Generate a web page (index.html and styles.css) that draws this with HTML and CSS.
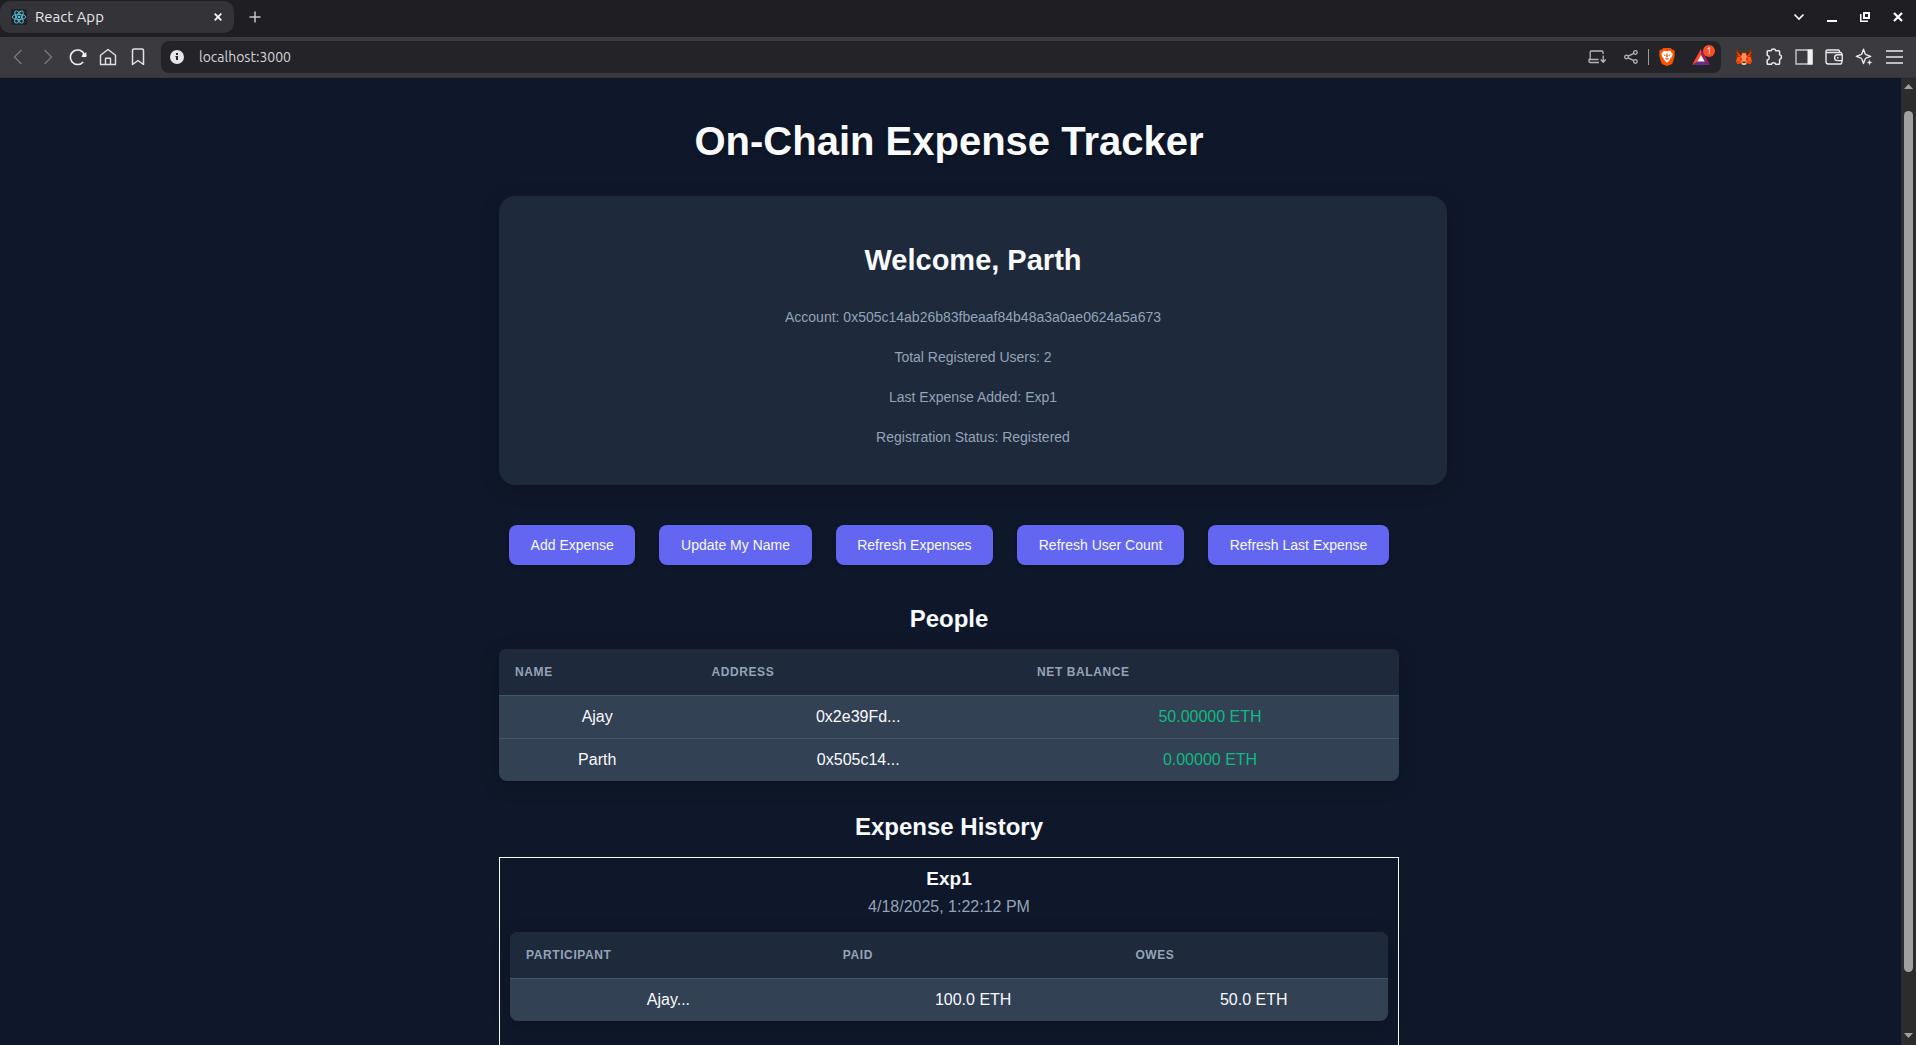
FILE: index.html
```
<!DOCTYPE html>
<html lang="en">
<head>
<meta charset="utf-8">
<title>React App</title>
<link rel="stylesheet" href="styles.css">
</head>
<body>
<header class="chrome">
  <div class="tabstrip">
    <div class="tab">
      <svg class="favicon" width="16" height="16" viewBox="0 0 16 16" fill="none" stroke="#58c4dc" stroke-width=".9">
        <rect width="16" height="16" rx="1.5" fill="#20232a" stroke="none"/>
        <ellipse cx="8" cy="8" rx="6.8" ry="2.6"/>
        <ellipse cx="8" cy="8" rx="6.8" ry="2.6" transform="rotate(60 8 8)"/>
        <ellipse cx="8" cy="8" rx="6.8" ry="2.6" transform="rotate(120 8 8)"/>
        <circle cx="8" cy="8" r="1.3" fill="#58c4dc" stroke="none"/>
      </svg>
      <span class="tab-title">React App</span>
      <button class="icon-btn tab-close" aria-label="Close tab"><svg width="8" height="8" viewBox="0 0 8 8" stroke="#fff" stroke-width="1.7"><path d="M.7.7l6.6 6.6M7.3.7L.7 7.3"/></svg></button>
    </div>
    <button class="icon-btn new-tab" aria-label="New tab"><svg width="12" height="12" viewBox="0 0 12 12" stroke="#c8c8cc" stroke-width="1.5"><path d="M6 .5v11M.5 6h11"/></svg></button>
    <div class="window-controls">
      <button class="icon-btn" aria-label="Search tabs"><svg width="12" height="8" viewBox="0 0 12 8" fill="none" stroke="#fff" stroke-width="1.6"><path d="M1.500 1.500L6 6l4.500-4.500"/></svg></button>
      <button class="icon-btn" aria-label="Minimize"><svg width="10" height="12" viewBox="0 0 10 12"><path fill="#fff" d="M0 9h10v2H0z"/></svg></button>
      <button class="icon-btn" aria-label="Restore"><svg width="10" height="10" viewBox="0 0 10 10" fill="none" stroke="#fff"><path stroke-width="2" d="M4 1h5v5H4z"/><path stroke-width="1.500" d="M.75 2v7.250H8"/></svg></button>
      <button class="icon-btn" aria-label="Close window"><svg width="10" height="10" viewBox="0 0 10 10" stroke="#fff" stroke-width="2.200"><path d="M1 1l8 8M9 1L1 9"/></svg></button>
    </div>
  </div>
  <div class="toolbar">
    <button class="icon-btn" aria-label="Back"><svg width="10" height="16" viewBox="0 0 10 16" fill="none" stroke="#77777c" stroke-width="1.4"><path d="M8.500 1L1.500 8l7 7"/></svg></button>
    <button class="icon-btn" aria-label="Forward"><svg width="10" height="16" viewBox="0 0 10 16" fill="none" stroke="#77777c" stroke-width="1.4"><path d="M1.500 1l7 7-7 7"/></svg></button>
    <button class="icon-btn" aria-label="Reload"><svg width="18" height="18" viewBox="0 0 18 18" fill="none" stroke="#f0f0f3" stroke-width="1.600"><path d="M14.200 14a7.300 7.300 0 1 1 1.200-7.500"/><circle cx="15.300" cy="7.200" r="2" fill="#f0f0f3" stroke="none"/><path d="M17.300 4v5h-5z" fill="#f0f0f3" stroke="none"/></svg></button>
    <button class="icon-btn" aria-label="Home"><svg width="18" height="18" viewBox="0 0 18 18" fill="none" stroke="#e2e2e6" stroke-width="1.400" stroke-linejoin="round"><path d="M1.500 7.300L9 1.500l7.500 5.800v9.200h-15z"/><path d="M6.500 16.500v-6.200h5v6.200"/></svg></button>
    <button class="icon-btn" aria-label="Bookmark"><svg width="14" height="18" viewBox="0 0 14 18" fill="none" stroke="#e2e2e6" stroke-width="1.500" stroke-linejoin="round"><path d="M1.500 2.500q0-1.500 1.500-1.500h8q1.500 0 1.500 1.500v14L7 12.500l-5.500 4z"/></svg></button>
    <div class="address-bar">
      <svg class="info" width="14" height="14" viewBox="0 0 14 14"><circle cx="7" cy="7" r="7" fill="#e6e6ea"/><path d="M6 3h2v2H6zM5.500 6H8v4H6V7.300h-.5z" fill="#26262b"/></svg>
      <input class="url" type="text" value="localhost:3000" aria-label="Address">
      <button class="icon-btn" aria-label="Install page"><svg width="18" height="14" viewBox="0 0 18 14" fill="none" stroke="#b4b4b9" stroke-width="1.300"><path d="M15 4V2.200Q15 1 14 1H3.200Q2.200 1 2.200 2.200V9.500h8.300M11 12.500H2Q1 12.500 1 11.500V9.500h2M15.200 5.500v6.500M12.700 9.500l2.500 2.700 2.500-2.700"/></svg></button>
      <button class="icon-btn" aria-label="Share"><svg width="14" height="14" viewBox="0 0 14 14" fill="none" stroke="#b4b4b9" stroke-width="1.300"><circle cx="2.500" cy="7" r="1.800"/><circle cx="11.400" cy="2.500" r="1.800"/><circle cx="11.400" cy="11.500" r="1.800"/><path d="M4.200 6.200l5.600-2.900M4.200 7.800l5.600 2.900"/></svg></button>
      <span class="divider"></span>
      <button class="icon-btn" aria-label="Brave Shields"><svg width="16" height="18" viewBox="0 0 16 18"><path fill="#ff5000" d="M4.300 0h7.400l1.600 1.700 1.600.1 1.100 2.400-.6 1.400.4 1.600-2 7.300q-.3 1-1.300 1.700L8 18l-4.500-1.800q-1-.7-1.300-1.700L.2 7.200l.4-1.600L0 4.200l1.100-2.400 1.600-.1z"/><path fill="#fff" d="M4.800 2.800l3.200.5 3.200-.5 2.500 3-.7 2.600-1.900 2.300v1.100L8 14.700l-3.100-2.900v-1.100L3 8.400l-.7-2.600z"/><path fill="#ff5000" d="M4.100 6.600l2.700.3-.8 1.300zM11.900 6.600l-2.700.3.8 1.300zM7.600 5.300h.8l.5 3.700h-1.800zM5.800 10.600L8 9.700l2.200.9L8 12.200z"/><path fill="#fff" d="M6.900 10.500h2.200L8 11.400z"/></svg></button>
      <button class="icon-btn rewards" aria-label="Brave Rewards"><svg width="18" height="16" viewBox="0 0 18 16"><path fill="#ff4724" d="M9 0L0 16l5.700-3.200L9 6.500z"/><path fill="#9e1f63" d="M9 0l9 16-5.700-3.200L9 6.500z"/><path fill="#662d91" d="M0 16h18l-5.700-3.500H5.700z"/><path fill="#fff" d="M9 6l3.700 6.500H5.300z"/></svg><span class="badge">1</span></button>
    </div>
    <button class="icon-btn" aria-label="MetaMask"><svg width="16" height="15" viewBox="0 0 16 15"><path fill="#ff5c16" d="M.8 0L6 3h4l5.200-3L16 4.500l-1 3.300.8 3-1 3.200-3.300-.8L9.500 15h-3l-2-1.800L1.200 14l-1-3.200.8-3L0 4.500z"/><path fill="#661800" d="M.8 0L6.300 3.300 5.500 6 1 7.300 0 4.500zM15.200 0L9.700 3.300l.8 2.700L15 7.300l1-2.800z"/><path fill="#e34807" d="M1 .7L5.300 6l-3.800.8zM15 .7L10.700 6l3.800.8zM.2 10.800h4.300v2.400L1.200 14zM15.800 10.800h-4.300v2.400l3.300.8z"/><path fill="#ff8d5d" d="M6 3.300h4l.8 3.500-1 4.700H6.200l-1-4.700z"/><path fill="#2b1a12" d="M4.200 8.200l2 .9-1.600.7zM11.800 8.200l-2 .9 1.600.7z"/><path fill="#c0c4cd" d="M5.800 12h4.400l-.5 3H6.300z"/><path fill="#3a3330" d="M6.600 11.700h2.800l.2 1.300H6.400z"/></svg></button>
    <button class="icon-btn" aria-label="Extensions"><svg width="18" height="18" viewBox="0 0 18 18" fill="none" stroke="#eaeaee" stroke-width="1.500" stroke-linejoin="round"><path d="M2.200 3.500q0-.8.800-.8h3.200a2.300 2.300 0 0 1 4.500 0h3.100q.8 0 .8.800v3.200a2.400 2.400 0 0 1 0 4.700v4q0 .9-.9.900h-2.900a2.300 2.300 0 0 0-4.400 0H3q-.8 0-.8-.8v-3.400a2.500 2.500 0 0 0 0-4.900z"/></svg></button>
    <button class="icon-btn" aria-label="Sidebar"><svg width="18" height="16" viewBox="0 0 18 16"><path d="M1 1h16v14H1z" fill="none" stroke="#c8c8cc" stroke-width="1.400"/><path fill="#f0f0f3" d="M12.500.5H17.500v15h-5z"/></svg></button>
    <button class="icon-btn" aria-label="Wallet"><svg width="18" height="16" viewBox="0 0 18 16" fill="none" stroke="#eaeaee" stroke-width="1.400" stroke-linejoin="round"><path d="M16.800 6V5q0-1.500-1.500-1.500H2.500Q1 3.500 1 2.200T2.500 1H13q1.500 0 1.500 1.500v1M1 2.200V12.500Q1 15 3.300 15h12q1.500 0 1.500-1.500v-1.700"/><path d="M17.200 5.800h-4.700a2.900 2.900 0 0 0 0 5.800h4.700z"/><path d="M12 8.700h1.500"/></svg></button>
    <button class="icon-btn" aria-label="Leo AI"><svg width="18" height="18" viewBox="0 0 18 18" fill="none" stroke="#eaeaee" stroke-width="1.400" stroke-linejoin="round"><path d="M8.500 1.200l1.700 4.700q.2.600.8.800l4.700 1.700-4.700 1.700q-.6.200-.8.800l-1.700 4.700-1.700-4.700q-.2-.6-.8-.8L1.300 8.400 6 6.700q.6-.2.800-.8z"/><path d="M14.500 10.800l1 2.600 2.500 1-2.500 1-1 2.600-1-2.600-2.500-1 2.500-1z" fill="#eaeaee" stroke="#3b3b3f" stroke-width=".6"/></svg></button>
    <button class="icon-btn" aria-label="Menu"><svg width="17" height="14" viewBox="0 0 17 14" stroke="#eaeaee" stroke-width="1.500"><path d="M0 1h17M0 7h17M0 13h17"/></svg></button>
  </div>
</header>

<div class="viewport">
  <main class="page">
    <div class="container">
      <h1 class="title">On-Chain Expense Tracker</h1>

      <section class="card">
        <h2 class="welcome">Welcome, Parth</h2>
        <div class="facts">
          <p>Account: 0x505c14ab26b83fbeaaf84b48a3a0ae0624a5a673</p>
          <p>Total Registered Users: 2</p>
          <p>Last Expense Added: Exp1</p>
          <p>Registration Status: Registered</p>
        </div>
      </section>

      <div class="actions">
        <button class="btn">Add Expense</button>
        <button class="btn">Update My Name</button>
        <button class="btn">Refresh Expenses</button>
        <button class="btn">Refresh User Count</button>
        <button class="btn">Refresh Last Expense</button>
      </div>

      <section class="section people">
        <h3 class="heading">People</h3>
        <table class="table">
          <thead><tr><th>Name</th><th>Address</th><th>Net Balance</th></tr></thead>
          <tbody>
            <tr><td>Ajay</td><td>0x2e39Fd...</td><td class="positive">50.00000 ETH</td></tr>
            <tr><td>Parth</td><td>0x505c14...</td><td class="positive">0.00000 ETH</td></tr>
          </tbody>
        </table>
      </section>

      <section class="section">
        <h3 class="heading">Expense History</h3>
        <article class="expense">
          <h4 class="expense-name">Exp1</h4>
          <p class="expense-date">4/18/2025, 1:22:12 PM</p>
          <table class="table">
            <thead><tr><th>Participant</th><th>Paid</th><th>Owes</th></tr></thead>
            <tbody>
              <tr><td>Ajay...</td><td>100.0 ETH</td><td>50.0 ETH</td></tr>
            </tbody>
          </table>
        </article>
      </section>
    </div>
  </main>
  <div class="scrollbar" aria-hidden="true">
    <svg width="9" height="5" viewBox="0 0 9 5"><path fill="#a0a0a0" d="M4.500 0L9 5H0z"/></svg>
    <div class="track"><div class="thumb"></div></div>
    <svg width="9" height="5" viewBox="0 0 9 5"><path fill="#a0a0a0" d="M0 0h9L4.500 5z"/></svg>
  </div>
</div>
</body>
</html>
```
FILE: styles.css
```
* {
  box-sizing: border-box;
}

body {
  margin: 0;
  height: 100vh;
  display: flex;
  flex-direction: column;
  overflow: hidden;
  background: #0f172a;
  color: #f8fafc;
  font-family: "Liberation Sans", Arial, sans-serif;
  font-size: 16px;
  line-height: 18px;
}

h1, h2, h3, h4, p {
  margin: 0;
}

button {
  border: 0;
  padding: 0;
  background: none;
  color: inherit;
  font: inherit;
  cursor: pointer;
}

svg {
  display: block;
}

/* Browser chrome */
.chrome {
  flex: none;
  font-family: Ubuntu, "Noto Sans", sans-serif;
}

.icon-btn {
  flex: none;
  display: flex;
  align-items: center;
  justify-content: center;
  width: 30px;
  height: 30px;
}

.tabstrip {
  display: flex;
  align-items: center;
  height: 37px;
  padding: 0 2px 3px 0;
  background: #1f1e23;
}

.tab {
  display: flex;
  align-items: center;
  gap: 8px;
  width: 234px;
  height: 32px;
  padding: 0 6px 0 11px;
  border-radius: 10px;
  background: #343338;
}

.tab-title {
  flex: 1;
  color: #e8e8ec;
  font-size: 15px;
}

.tab-close {
  width: 20px;
  height: 20px;
}

.new-tab {
  width: 28px;
  margin: 0 7px;
}

.window-controls {
  display: flex;
  margin-left: auto;
}

.window-controls .icon-btn {
  width: 33px;
}

.toolbar {
  display: flex;
  align-items: center;
  height: 41px;
  padding: 0 7px 0 3px;
  border-bottom: 1px solid #34343a;
  background: #3b3b3f;
}

.address-bar {
  flex: 1;
  display: flex;
  align-items: center;
  height: 32px;
  margin: 0 8px;
  padding: 0 3px 0 9px;
  border-radius: 8px;
  background: #242428;
}

.url {
  flex: 1;
  min-width: 0;
  margin-left: 15px;
  padding: 0;
  border: 0;
  outline: 0;
  background: none;
  color: #d4d4da;
  font-family: inherit;
  font-size: 14px;
}

.address-bar .icon-btn {
  width: 34px;
}

.divider {
  width: 1px;
  height: 16px;
  margin-right: 1px;
  background: #9a9aa0;
}

.rewards {
  position: relative;
}

.badge {
  position: absolute;
  top: 3px;
  right: 3px;
  width: 12px;
  height: 12px;
  border-radius: 6px;
  background: #fb4f29;
  color: #fff;
  font-size: 9px;
  line-height: 12px;
  text-align: center;
}

/* Page area and its scrollbar */
.viewport {
  flex: 1;
  min-height: 0;
  display: flex;
}

.page {
  flex: 1;
  overflow: hidden;
  padding: 39px 3px 0 0;
}

.scrollbar {
  flex: none;
  display: flex;
  flex-direction: column;
  align-items: center;
  gap: 6px;
  width: 15px;
  padding: 6px 0 7px;
  background: #2c2c2c;
}

.track {
  flex: 1;
  padding-top: 16px;
}

.thumb {
  width: 9px;
  height: 94%;
  border-radius: 5px;
  background: #a0a0a0;
}

/* App */
.container {
  max-width: 900px;
  margin: 0 auto;
  text-align: center;
}

.title {
  margin-bottom: 31px;
  font-size: 40px;
  line-height: 48px;
  text-shadow: 0 2px 4px rgba(0, 0, 0, 0.3);
}

/* The card reaches past the container by its side padding */
.card {
  margin-right: -48px;
  padding: 46px 24px 40px;
  border-radius: 16px;
  background: #1e293b;
  box-shadow: 0 4px 20px rgba(0, 0, 0, 0.15);
}

.welcome {
  margin-bottom: 31px;
  font-size: 29px;
  line-height: 36px;
}

.facts {
  display: grid;
  gap: 24px;
  color: #94a3b8;
  font-size: 14px;
  line-height: 16px;
}

.actions {
  display: flex;
  flex-wrap: wrap;
  gap: 24px;
  margin: 40px 10px;
}

.btn {
  flex: 1 1 auto;
  height: 40px;
  padding: 0 20px;
  border-radius: 8px;
  background: #6366f1;
  color: #f8fafc;
  font-size: 14px;
  box-shadow: 0 2px 4px rgba(0, 0, 0, 0.2);
}

.people {
  margin-bottom: 32px;
}

.heading {
  margin-bottom: 16px;
  font-size: 24px;
  line-height: 28px;
}

.table {
  width: 100%;
  border-spacing: 0;
  border-radius: 8px;
  overflow: hidden;
  background: #334155;
  box-shadow: 0 4px 20px rgba(0, 0, 0, 0.2);
}

.table th {
  padding: 16px;
  border-bottom: 1px solid #475569;
  background: #1e293b;
  color: #94a3b8;
  font-size: 12px;
  line-height: 14px;
  letter-spacing: 0.05em;
  text-align: left;
  text-transform: uppercase;
}

.table td {
  padding: 12px 16px;
  border-bottom: 1px solid #475569;
}

.table tr:last-child td {
  border-bottom: 0;
}

.table .positive {
  color: #10b981;
}

.expense {
  padding: 10px 10px 40px;
  border: 1px solid #f8fafc;
}

.expense-name {
  margin-bottom: 8px;
  font-size: 19px;
  line-height: 22px;
}

.expense-date {
  margin-bottom: 16px;
  color: #94a3b8;
}
```
